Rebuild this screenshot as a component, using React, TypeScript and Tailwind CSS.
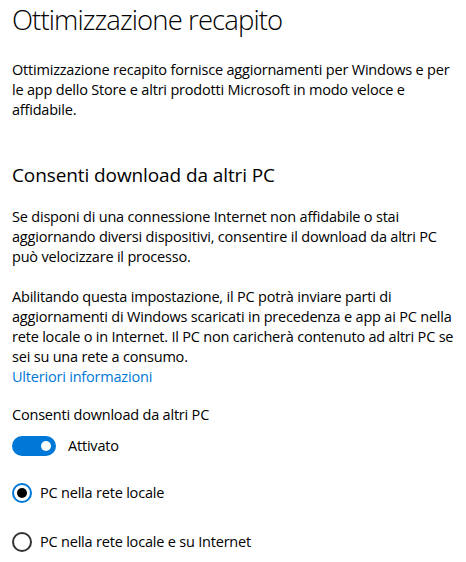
import React from "react";

const Radio = ({ checked, label }: { checked?: boolean; label: string }) => (
  <label className="flex items-center gap-2">
    <span
      className={`flex items-center justify-center w-5 h-5 rounded-full border-2 ${
        checked ? "border-[#0078d7]" : "border-[#333]"
      }`}
    >
      {checked && <span className="w-2.5 h-2.5 rounded-full bg-black" />}
    </span>
    <span>{label}</span>
  </label>
);

export default function App() {
  return (
    <div className="w-[466px] h-[562px] overflow-hidden bg-white pl-3 pr-1 text-black text-[14.5px] tracking-[-0.2px] leading-5 font-['Segoe_UI','Open_Sans',sans-serif]">
      <h1 className="text-[27.5px] font-light leading-10 tracking-[-0.9px]">Ottimizzazione recapito</h1>
      <p className="mt-5">
        Ottimizzazione recapito fornisce aggiornamenti per Windows e per le app dello Store e altri prodotti
        Microsoft in modo veloce e affidabile.
      </p>
      <h2 className="mt-[41px] text-[19px] leading-7 tracking-[-0.1px]">Consenti download da altri PC</h2>
      <p className="mt-[18px]">
        Se disponi di una connessione Internet non affidabile o stai aggiornando diversi dispositivi, consentire
        il download da altri PC può velocizzare il processo.
      </p>
      <p className="mt-5">
        Abilitando questa impostazione, il PC potrà inviare parti di aggiornamenti di Windows scaricati in
        precedenza e app ai PC nella rete locale o in Internet. Il PC non caricherà contenuto ad altri PC se sei
        su una rete a consumo.
      </p>
      <a className="block text-[#0078d7]">Ulteriori informazioni</a>
      <div className="mt-[18px]">Consenti download da altri PC</div>
      <div className="mt-[11px] flex items-center gap-3">
        <span className="flex items-center justify-end w-11 h-5 rounded-full bg-[#0078d7] pr-[5px]">
          <span className="w-2.5 h-2.5 rounded-full bg-white" />
        </span>
        <span>Attivato</span>
      </div>
      <div className="mt-[27px] flex flex-col gap-[29px]">
        <Radio checked label="PC nella rete locale" />
        <Radio label="PC nella rete locale e su Internet" />
      </div>
    </div>
  );
}
